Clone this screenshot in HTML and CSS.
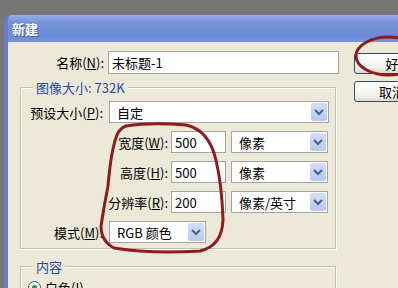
FILE: index.html
```html
<!DOCTYPE html>
<html lang="zh-CN">
<head>
  <meta charset="UTF-8" />
  <meta name="viewport" content="width=device-width, initial-scale=1.0"/>
  <title>新建</title>
  <link rel="stylesheet" href="styles.css">
</head>
<body>
  <div class="window">
    <div class="titlebar">新建</div>

    <div class="dialog">
      <div class="main">
        <div class="row name-row">
          <label class="label name-label">名称(<u>N</u>):</label>
          <div class="field name-field">未标题-1</div>
        </div>

        <div class="group size-group">
          <span class="group-title">图像大小: 732K</span>

          <div class="row">
            <label class="label short">预设大小(<u>P</u>):</label>
            <div class="select preset">
              <span class="value">自定</span>
              <span class="arrow"><svg width="10" height="7" viewBox="0 0 10 7"><polyline points="1,1 5,5 9,1" /></svg></span>
            </div>
          </div>

          <div class="row">
            <label class="label long">宽度(<u>W</u>):</label>
            <div class="field num">500</div>
            <div class="select unit">
              <span class="value">像素</span>
              <span class="arrow"><svg width="10" height="7" viewBox="0 0 10 7"><polyline points="1,1 5,5 9,1" /></svg></span>
            </div>
          </div>

          <div class="row">
            <label class="label long">高度(<u>H</u>):</label>
            <div class="field num">500</div>
            <div class="select unit">
              <span class="value">像素</span>
              <span class="arrow"><svg width="10" height="7" viewBox="0 0 10 7"><polyline points="1,1 5,5 9,1" /></svg></span>
            </div>
          </div>

          <div class="row">
            <label class="label long">分辨率(<u>R</u>):</label>
            <div class="field num">200</div>
            <div class="select unit">
              <span class="value">像素/英寸</span>
              <span class="arrow"><svg width="10" height="7" viewBox="0 0 10 7"><polyline points="1,1 5,5 9,1" /></svg></span>
            </div>
          </div>

          <div class="row">
            <label class="label short">模式(<u>M</u>):</label>
            <div class="select mode">
              <span class="value">RGB 颜色</span>
              <span class="arrow"><svg width="10" height="7" viewBox="0 0 10 7"><polyline points="1,1 5,5 9,1" /></svg></span>
            </div>
          </div>
        </div>

        <div class="group content-group">
          <span class="group-title">内容</span>
          <div class="radio-row">
            <span class="radio"><span class="dot"></span></span>
            <span>白色(<u>I</u>)</span>
          </div>
        </div>
      </div>

      <div class="side">
        <button class="btn">好</button>
        <button class="btn">取消</button>
      </div>
    </div>
  </div>

  <!-- red marks drawn over the screenshot -->
  <svg class="marks" width="398" height="288" viewBox="0 0 398 288">
    <ellipse cx="389" cy="56" rx="33" ry="19" />
    <path d="M126 126 Q150 122 186 125 Q209 130 216 160 Q222 186 223 220 Q222 246 200 251 Q150 254 114 248 Q101 241 101 226 Q104 206 108 186 Q111 150 117 135 Q120 128 126 126 Z" />
  </svg>
</body>
</html>
```

FILE: styles.css
```css
* {
  box-sizing: border-box;
}
body {
  margin: 0;
  background-color: #787878;
  font-family: "Noto Sans CJK SC", "Noto Sans", sans-serif;
  font-size: 13px;
  color: #000;
  overflow: hidden;
  height: 288px;
  position: relative;
}
.window {
  margin: 15px 0 0 4px;
  height: 273px;
  border-left: 4px solid #6b7bcb;
  border-radius: 7px 0 0 0;
  overflow: hidden;
}
.titlebar {
  height: 27px;
  padding-left: 4px;
  display: flex;
  align-items: center;
  background: linear-gradient(#97aee8, #7390da 30%, #6d8ad6 80%, #7a95da);
  color: #fff;
  font-weight: bold;
  text-shadow: 1px 1px 0 #4a5f9e;
}
.dialog {
  display: flex;
  height: 246px;
  padding-top: 9px;
  background-color: #ece9d8;
}
.main {
  width: 332px;
}
.row {
  display: flex;
  align-items: center;
  height: 22px;
}
.label {
  text-align: right;
  white-space: nowrap;
}
.name-label {
  width: 96px;
  margin-right: 4px;
}
.field {
  height: 23px;
  background: #fff;
  border: 1px solid #a4a4a4;
  padding: 1px 3px;
  line-height: 19px;
}
.name-field {
  width: 231px;
}
.group {
  position: relative;
  margin-left: 12px;
  width: 316px;
  border: 1px solid #c3c0b0;
  box-shadow: inset 1px 1px 0 #fff, 1px 1px 0 #fff;
}
.group-title {
  position: absolute;
  top: -10px;
  left: 12px;
  padding: 0 3px;
  background: #ece9d8;
  color: #1f4ea4;
  line-height: 19px;
}
.size-group {
  margin-top: 14px;
  height: 162px;
  padding-top: 13px;
  display: flex;
  flex-direction: column;
  gap: 8px;
}
.short {
  width: 82px;
  margin-right: 6px;
}
.long {
  width: 147px;
  margin-right: 3px;
}
.num {
  width: 55px;
  height: 22px;
  margin-right: 5px;
}
.select {
  display: flex;
  align-items: center;
  height: 22px;
  background: #fff;
  border: 1px solid #a4a4a4;
  padding: 1px;
}
.select .value {
  flex: 1;
  padding-left: 6px;
  white-space: nowrap;
}
.arrow {
  width: 16px;
  height: 18px;
  display: flex;
  align-items: center;
  justify-content: center;
  background: linear-gradient(#d3def8, #b5c8f2);
  border-radius: 2px;
}
.arrow polyline {
  fill: none;
  stroke: #4b5f8c;
  stroke-width: 2;
}
.preset {
  width: 220px;
}
.unit,
.mode {
  width: 97px;
}
.content-group {
  margin-top: 17px;
  height: 60px;
  padding: 11px 0 0 7px;
}
.radio-row {
  display: flex;
  align-items: center;
  gap: 4px;
}
.radio {
  width: 13px;
  height: 13px;
  border: 1px solid #1c5180;
  border-radius: 50%;
  background: #fff;
  display: flex;
  align-items: center;
  justify-content: center;
}
.radio .dot {
  width: 5px;
  height: 5px;
  border-radius: 50%;
  background: #2d9a2d;
}
.side {
  margin-left: 15px;
  padding-top: 2px;
  display: flex;
  flex-direction: column;
  gap: 7px;
}
.btn {
  width: 76px;
  height: 21px;
  padding: 0;
  font: inherit;
  line-height: 19px;
  border: 1px solid #3a4a66;
  border-radius: 3px;
  background: linear-gradient(#fff, #f4f3ee 70%, #dcd9cb);
  text-align: center;
}
.marks {
  position: absolute;
  top: 0;
  left: 0;
  pointer-events: none;
}
.marks ellipse,
.marks path {
  fill: none;
  stroke: #8e1b1e;
  stroke-width: 3;
}
```
